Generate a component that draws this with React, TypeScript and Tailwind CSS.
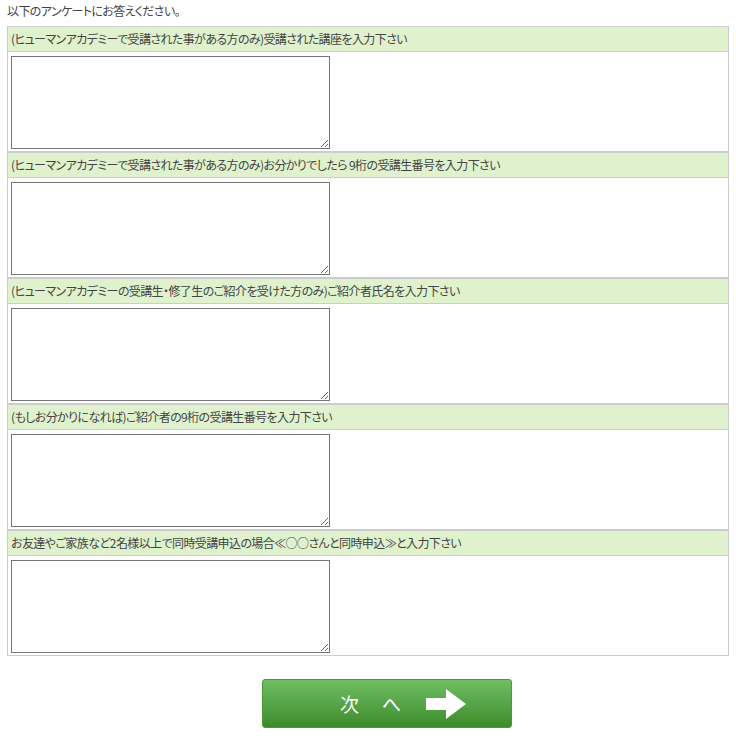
import React from "react";

const questions = [
  "(ヒューマンアカデミーで受講された事がある方のみ)受講された講座を入力下さい",
  "(ヒューマンアカデミーで受講された事がある方のみ)お分かりでしたら 9桁の受講生番号を入力下さい",
  "(ヒューマンアカデミーの受講生・修了生のご紹介を受けた方のみ)ご紹介者氏名を入力下さい",
  "(もしお分かりになれば)ご紹介者の9桁の受講生番号を入力下さい",
  "お友達やご家族など2名様以上で同時受講申込の場合≪○○さんと同時申込≫と入力下さい",
];

export default function App() {
  return (
    <div
      className="w-[736px] h-[753px] bg-white text-[12px] text-[#444] [font-feature-settings:'palt'] tracking-[-0.6px]"
      style={{ fontFamily: '"Noto Sans CJK JP", "Noto Sans", sans-serif' }}
    >
      <div className="h-[26px] pl-[7px] pt-[2px] leading-[18px]">以下のアンケートにお答えください。</div>
      <div className="ml-[7px] w-[722px] border-x border-[#cccccc]">
        {questions.map((q, i) => (
          <div key={i}>
            <div className="h-[26px] border-y border-[#cccccc] bg-[#dff2cd] pl-[3px] leading-[24px] whitespace-nowrap">
              {q}
            </div>
            <div className="h-[100px] border-b border-[#cccccc] pl-[3px] pt-[4px]">
              <textarea className="block w-[319px] h-[93px] border border-[#767676] bg-white resize-y outline-none" />
            </div>
          </div>
        ))}
      </div>
      <div className="pl-[262px] pt-[23px]">
        <button className="w-[250px] h-[49px] rounded-[3px] border border-[#4a9a3a] bg-gradient-to-b from-[#6fbe62] to-[#3d8c2b] flex items-center pl-[77px] text-white">
          <span className="text-[19px] tracking-normal leading-none">次</span>
          <span className="text-[19px] tracking-normal leading-none ml-[23px]">へ</span>
          <svg width="40" height="30" viewBox="0 0 40 30" className="ml-[25px]">
            <polygon points="0,9 20,9 20,0 40,15 20,30 20,21 0,21" fill="#ffffff" />
          </svg>
        </button>
      </div>
    </div>
  );
}
